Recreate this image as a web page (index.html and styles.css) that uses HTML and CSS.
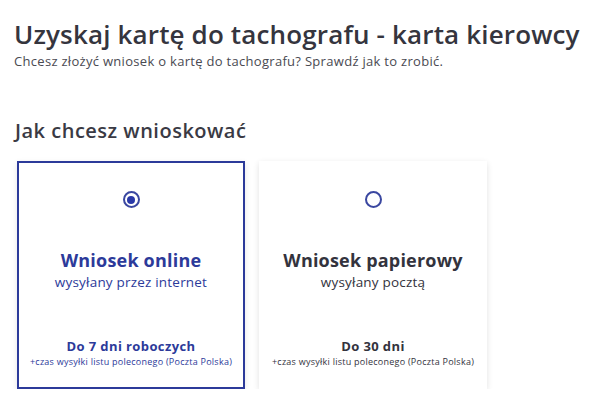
FILE: index.html
```html
<!DOCTYPE html>
<html lang="pl">
<head>
<meta charset="utf-8">
<link rel="stylesheet" href="styles.css">
</head>
<body>
<main class="page">
  <h1 class="title">Uzyskaj kartę do tachografu - karta kierowcy</h1>
  <p class="lead">Chcesz złożyć wniosek o kartę do tachografu? Sprawdź jak to zrobić.</p>
  <h2 class="section">Jak chcesz wnioskować</h2>
  <div class="options">
    <label class="card card--active">
      <span class="radio radio--checked"></span>
      <span class="card-title">Wniosek online</span>
      <span class="card-sub">wysyłany przez internet</span>
      <span class="card-time">Do 7 dni roboczych</span>
      <span class="card-note">+czas wysyłki listu poleconego (Poczta Polska)</span>
    </label>
    <label class="card">
      <span class="radio"></span>
      <span class="card-title">Wniosek papierowy</span>
      <span class="card-sub">wysyłany pocztą</span>
      <span class="card-time">Do 30 dni</span>
      <span class="card-note">+czas wysyłki listu poleconego (Poczta Polska)</span>
    </label>
  </div>
</main>
</body>
</html>
```
FILE: styles.css
```css
* { box-sizing: border-box; }
html, body { margin: 0; padding: 0; background: #fff; }
body {
  font-family: "Open Sans", "Liberation Sans", sans-serif;
  color: #33333d;
}
.page { padding: 16px 14px 0 14px; }
.title {
  margin: 0;
  font-size: 26px;
  line-height: 36px;
  font-weight: 600;
  letter-spacing: 0.15px;
  color: #35353e;
}
.lead {
  margin: 0;
  font-size: 13px;
  line-height: 18px;
  letter-spacing: 0.3px;
  color: #4a4a52;
}
.section {
  margin: 47px 0 0 1px;
  font-size: 20px;
  line-height: 28px;
  font-weight: 600;
  letter-spacing: 0.5px;
  color: #3a3a44;
}
.options {
  display: flex;
  gap: 14px;
  margin: 16px 0 0 3px;
}
.card {
  width: 228px;
  height: 228px;
  background: #fff;
  box-shadow: 0 2px 6px rgba(0,0,0,0.12);
  display: flex;
  flex-direction: column;
  align-items: center;
  padding-top: 30px;
  color: #33333d;
}
.card--active {
  border: 2px solid #2c3a9a;
  box-shadow: 0 2px 6px rgba(0,0,0,0.10);
  padding-top: 28px;
  color: #2c3a9a;
}
.radio {
  width: 17px;
  height: 17px;
  border-radius: 50%;
  border: 2px solid #3a47a0;
  position: relative;
}
.radio--checked::after {
  content: "";
  position: absolute;
  left: 2.5px;
  top: 2.5px;
  width: 8px;
  height: 8px;
  border-radius: 50%;
  background: #2a39a8;
}
.card-title {
  margin-top: 40px;
  font-size: 18px;
  line-height: 25px;
  font-weight: 700;
  letter-spacing: 0.2px;
}
.card-sub {
  font-size: 13.5px;
  line-height: 19px;
  font-weight: 400;
  letter-spacing: 0.2px;
}
.card-time {
  margin-top: 45px;
  font-size: 13px;
  line-height: 18px;
  font-weight: 700;
  letter-spacing: 0.4px;
}
.card-note {
  font-size: 9px;
  line-height: 13px;
  letter-spacing: 0.25px;
}
```
